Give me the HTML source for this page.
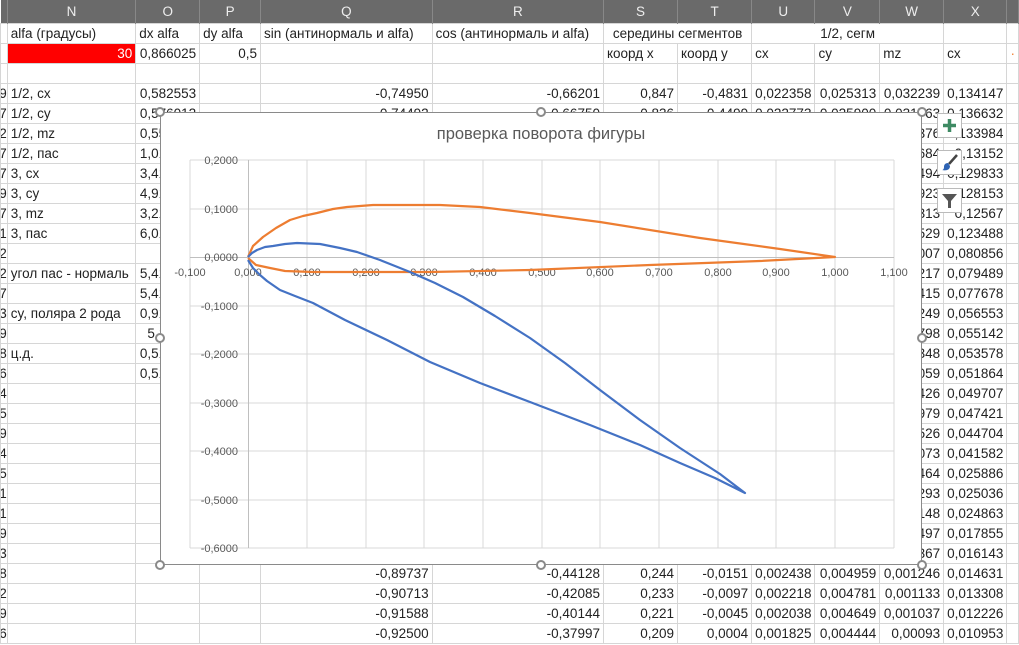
<!DOCTYPE html>
<html><head><meta charset="utf-8">
<style>
body{margin:0;width:1019px;height:645px;overflow:hidden;background:#fff;font-family:"Liberation Sans","DejaVu Sans",sans-serif;font-size:13.5px;color:#222;position:relative}
table{border-collapse:collapse;table-layout:fixed;position:absolute;left:0;top:0}
td{height:20px;box-sizing:border-box;border:1px solid #d6d6d6;padding:0 3px;white-space:nowrap;overflow:hidden;line-height:18px}
th{height:23px;background:#6a6a6a;color:#eee;font-weight:normal;border-right:1px solid #888;font-size:13.5px;padding:0}
.r{text-align:right}.c{text-align:center}
.red{background:#ff0000;color:#fff;text-align:right}
.lft{padding:0;text-align:right;overflow:hidden;text-indent:-3px}
#chart{position:absolute;left:160px;top:112px;width:762px;height:453px;background:#fff;border:1px solid #8a8a8a;box-sizing:border-box}
.h{position:absolute;width:10px;height:10px;border:2px solid #8a8a8a;border-radius:50%;background:#fff;box-sizing:border-box}
.btn{position:absolute;left:937px;width:25px;height:25px;background:#fff;border:1px solid #bbb;box-sizing:border-box}
</style></head><body>
<table>
<colgroup><col style="width:7px"><col style="width:129px"><col style="width:64px"><col style="width:63px"><col style="width:174px"><col style="width:173px"><col style="width:75px"><col style="width:75px"><col style="width:63px"><col style="width:65px"><col style="width:64px"><col style="width:61px"><col style="width:6px"></colgroup>
<tr><th></th><th>N</th><th>O</th><th>P</th><th>Q</th><th>R</th><th>S</th><th>T</th><th>U</th><th>V</th><th>W</th><th>X</th><th></th></tr>
<tr><td class="lft"></td><td>alfa (градусы)</td><td>dx alfa</td><td>dy alfa</td><td>sin (антинормаль и alfa)</td><td>cos (антинормаль и alfa)</td><td colspan="2" class="c">середины сегментов</td><td colspan="3" class="c">1/2, сегм</td><td></td><td></td></tr>
<tr><td class="lft"></td><td class="red">30</td><td class="r">0,866025</td><td class="r">0,5</td><td></td><td></td><td>коорд x</td><td>коорд y</td><td>cx</td><td>cy</td><td>mz</td><td>cx</td><td style="color:#f08030">·</td></tr>
<tr><td class="lft"></td><td></td><td></td><td></td><td></td><td></td><td></td><td></td><td></td><td></td><td></td><td></td><td></td></tr>
<tr><td class="lft">9</td><td>1/2, cx</td><td class="r">0,582553</td><td></td><td class="r">-0,74950</td><td class="r">-0,66201</td><td class="r">0,847</td><td class="r">-0,4831</td><td class="r">0,022358</td><td class="r">0,025313</td><td class="r">0,032239</td><td class="r">0,134147</td><td></td></tr>
<tr><td class="lft">7</td><td>1/2, cy</td><td class="r">0,576012</td><td></td><td class="r">-0,74492</td><td class="r">-0,66750</td><td class="r">0,836</td><td class="r">-0,4499</td><td class="r">0,022773</td><td class="r">0,025900</td><td class="r">0,031763</td><td class="r">0,136632</td><td></td></tr>
<tr><td class="lft">2</td><td>1/2, mz</td><td class="r">0,551234</td><td></td><td></td><td></td><td></td><td></td><td></td><td></td><td class="r">0,031376</td><td class="r">0,133984</td><td></td></tr>
<tr><td class="lft">7</td><td>1/2, пас</td><td class="r">1,012345</td><td></td><td></td><td></td><td></td><td></td><td></td><td></td><td class="r">0,030684</td><td class="r">0,13152</td><td></td></tr>
<tr><td class="lft">7</td><td>3, cx</td><td class="r">3,412345</td><td></td><td></td><td></td><td></td><td></td><td></td><td></td><td class="r">0,029494</td><td class="r">0,129833</td><td></td></tr>
<tr><td class="lft">9</td><td>3, cy</td><td class="r">4,912345</td><td></td><td></td><td></td><td></td><td></td><td></td><td></td><td class="r">0,028923</td><td class="r">0,128153</td><td></td></tr>
<tr><td class="lft">7</td><td>3, mz</td><td class="r">3,212345</td><td></td><td></td><td></td><td></td><td></td><td></td><td></td><td class="r">0,021313</td><td class="r">0,12567</td><td></td></tr>
<tr><td class="lft">1</td><td>3, пас</td><td class="r">6,012345</td><td></td><td></td><td></td><td></td><td></td><td></td><td></td><td class="r">0,019529</td><td class="r">0,123488</td><td></td></tr>
<tr><td class="lft">2</td><td></td><td></td><td></td><td></td><td></td><td></td><td></td><td></td><td></td><td class="r">0,012007</td><td class="r">0,080856</td><td></td></tr>
<tr><td class="lft">2</td><td>угол пас - нормаль</td><td class="r">5,412345</td><td></td><td></td><td></td><td></td><td></td><td></td><td></td><td class="r">0,011217</td><td class="r">0,079489</td><td></td></tr>
<tr><td class="lft">7</td><td></td><td class="r">5,412345</td><td></td><td></td><td></td><td></td><td></td><td></td><td></td><td class="r">0,010415</td><td class="r">0,077678</td><td></td></tr>
<tr><td class="lft">3</td><td>cy, поляра 2 рода</td><td class="r">0,912345</td><td></td><td></td><td></td><td></td><td></td><td></td><td></td><td class="r">0,007249</td><td class="r">0,056553</td><td></td></tr>
<tr><td class="lft">9</td><td></td><td class="r">5,12345</td><td></td><td></td><td></td><td></td><td></td><td></td><td></td><td class="r">0,005798</td><td class="r">0,055142</td><td></td></tr>
<tr><td class="lft">8</td><td>ц.д.</td><td class="r">0,512345</td><td></td><td></td><td></td><td></td><td></td><td></td><td></td><td class="r">0,005348</td><td class="r">0,053578</td><td></td></tr>
<tr><td class="lft">6</td><td></td><td class="r">0,512345</td><td></td><td></td><td></td><td></td><td></td><td></td><td></td><td class="r">0,005059</td><td class="r">0,051864</td><td></td></tr>
<tr><td class="lft">4</td><td></td><td></td><td></td><td></td><td></td><td></td><td></td><td></td><td></td><td class="r">0,005426</td><td class="r">0,049707</td><td></td></tr>
<tr><td class="lft">5</td><td></td><td></td><td></td><td></td><td></td><td></td><td></td><td></td><td></td><td class="r">0,004979</td><td class="r">0,047421</td><td></td></tr>
<tr><td class="lft">9</td><td></td><td></td><td></td><td></td><td></td><td></td><td></td><td></td><td></td><td class="r">0,004526</td><td class="r">0,044704</td><td></td></tr>
<tr><td class="lft">4</td><td></td><td></td><td></td><td></td><td></td><td></td><td></td><td></td><td></td><td class="r">0,004073</td><td class="r">0,041582</td><td></td></tr>
<tr><td class="lft">5</td><td></td><td></td><td></td><td></td><td></td><td></td><td></td><td></td><td></td><td class="r">0,002464</td><td class="r">0,025886</td><td></td></tr>
<tr><td class="lft">1</td><td></td><td></td><td></td><td></td><td></td><td></td><td></td><td></td><td></td><td class="r">0,002293</td><td class="r">0,025036</td><td></td></tr>
<tr><td class="lft">1</td><td></td><td></td><td></td><td></td><td></td><td></td><td></td><td></td><td></td><td class="r">0,002148</td><td class="r">0,024863</td><td></td></tr>
<tr><td class="lft">9</td><td></td><td></td><td></td><td></td><td></td><td></td><td></td><td></td><td></td><td class="r">0,001497</td><td class="r">0,017855</td><td></td></tr>
<tr><td class="lft">3</td><td></td><td></td><td></td><td></td><td></td><td></td><td></td><td></td><td></td><td class="r">0,001367</td><td class="r">0,016143</td><td></td></tr>
<tr><td class="lft">8</td><td></td><td></td><td></td><td class="r">-0,89737</td><td class="r">-0,44128</td><td class="r">0,244</td><td class="r">-0,0151</td><td class="r">0,002438</td><td class="r">0,004959</td><td class="r">0,001246</td><td class="r">0,014631</td><td></td></tr>
<tr><td class="lft">2</td><td></td><td></td><td></td><td class="r">-0,90713</td><td class="r">-0,42085</td><td class="r">0,233</td><td class="r">-0,0097</td><td class="r">0,002218</td><td class="r">0,004781</td><td class="r">0,001133</td><td class="r">0,013308</td><td></td></tr>
<tr><td class="lft">9</td><td></td><td></td><td></td><td class="r">-0,91588</td><td class="r">-0,40144</td><td class="r">0,221</td><td class="r">-0,0045</td><td class="r">0,002038</td><td class="r">0,004649</td><td class="r">0,001037</td><td class="r">0,012226</td><td></td></tr>
<tr><td class="lft">6</td><td></td><td></td><td></td><td class="r">-0,92500</td><td class="r">-0,37997</td><td class="r">0,209</td><td class="r">0,0004</td><td class="r">0,001825</td><td class="r">0,004444</td><td class="r">0,00093</td><td class="r">0,010953</td><td></td></tr>
</table>

<div id="chart"></div>
<svg style="position:absolute;left:0;top:0" width="1019" height="645" font-family="Liberation Sans, sans-serif">
<text x="541" y="139" font-size="16.5" fill="#595959" text-anchor="middle">проверка поворота фигуры</text>
<g stroke="#d9d9d9" stroke-width="1">
<line x1="190" y1="160" x2="894" y2="160"/><line x1="190" y1="209" x2="894" y2="209"/><line x1="190" y1="306" x2="894" y2="306"/><line x1="190" y1="354" x2="894" y2="354"/><line x1="190" y1="403" x2="894" y2="403"/><line x1="190" y1="451" x2="894" y2="451"/><line x1="190" y1="500" x2="894" y2="500"/><line x1="190" y1="548" x2="894" y2="548"/>
<line x1="190" y1="160" x2="190" y2="548"/><line x1="307" y1="160" x2="307" y2="548"/><line x1="366" y1="160" x2="366" y2="548"/><line x1="424" y1="160" x2="424" y2="548"/><line x1="483" y1="160" x2="483" y2="548"/><line x1="542" y1="160" x2="542" y2="548"/><line x1="600" y1="160" x2="600" y2="548"/><line x1="659" y1="160" x2="659" y2="548"/><line x1="718" y1="160" x2="718" y2="548"/><line x1="776" y1="160" x2="776" y2="548"/><line x1="835" y1="160" x2="835" y2="548"/><line x1="894" y1="160" x2="894" y2="548"/>
</g>
<line x1="190" y1="257.5" x2="894" y2="257.5" stroke="#bfbfbf"/>
<line x1="248.5" y1="160" x2="248.5" y2="548" stroke="#bfbfbf"/>
<g font-size="11" fill="#595959" text-anchor="end">
<text x="238" y="164">0,2000</text><text x="238" y="213">0,1000</text><text x="238" y="261">0,0000</text><text x="238" y="310">-0,1000</text><text x="238" y="358">-0,2000</text><text x="238" y="407">-0,3000</text><text x="238" y="455">-0,4000</text><text x="238" y="504">-0,5000</text><text x="238" y="552">-0,6000</text>
</g>
<g font-size="11" fill="#595959" text-anchor="middle">
<text x="190" y="276">-0,100</text><text x="248" y="276">0,000</text><text x="307" y="276">0,100</text><text x="366" y="276">0,200</text><text x="424" y="276">0,300</text><text x="483" y="276">0,400</text><text x="542" y="276">0,500</text><text x="600" y="276">0,600</text><text x="659" y="276">0,700</text><text x="718" y="276">0,800</text><text x="776" y="276">0,900</text><text x="835" y="276">1,000</text><text x="894" y="276">1,100</text>
</g>
<path d="M248,257 L253,246 L263,237 L276,228 L290,220 L303,216 L317,213 L333,209 L347,207 L373,205 L440,205 L480,207 L530,213 L600,222 L700,238 L780,249 L835,257 L760,261 L650,265 L530,270 L430,272 L313,272 L285,271 L270,268 L256,265 L248,258" fill="none" stroke="#ed7d31" stroke-width="2.2" stroke-linejoin="round"/>
<path d="M248,257 L252,253 L257,250 L265,247 L273,246 L285,244 L297,243 L320,244 L340,248 L357,252 L380,260 L395,266 L410,272 L435,283 L463,297 L495,316 L530,338 L565,363 L600,390 L640,420 L680,448 L720,474 L745,493 L715,478 L680,463 L640,445 L590,425 L530,402 L480,383 L430,362 L387,340 L345,320 L313,303 L295,296 L280,290 L267,281 L260,275 L253,268 L248,260" fill="none" stroke="#4472c4" stroke-width="2.2" stroke-linejoin="round"/>
</svg>
<div class="h" style="left:155px;top:107px"></div><div class="h" style="left:536px;top:107px"></div><div class="h" style="left:917px;top:107px"></div>
<div class="h" style="left:155px;top:333px"></div><div class="h" style="left:917px;top:333px"></div>
<div class="h" style="left:155px;top:560px"></div><div class="h" style="left:536px;top:560px"></div><div class="h" style="left:917px;top:560px"></div>
<div class="btn" style="top:113px"><svg width="23" height="23"><path d="M11.5,5v13M5,11.5h13" stroke="#3e8a63" stroke-width="3.5"/></svg></div>
<div class="btn" style="top:150px"><svg width="23" height="23"><path d="M19,4L11,13" stroke="#444" stroke-width="2.5"/><path d="M10,12c-3,0-4,2-4,4c0,2-1,3-2,3c4,1,8,0,8-4z" fill="#2e64b4"/></svg></div>
<div class="btn" style="top:188px"><svg width="23" height="23"><path d="M4,5h15l-6,7v7h-3v-7z" fill="#555"/></svg></div>
</body></html>
